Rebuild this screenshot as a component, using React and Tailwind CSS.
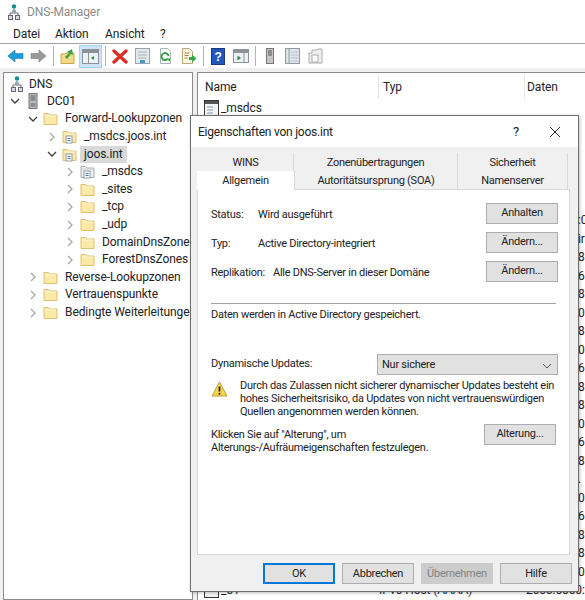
import React from "react";

function DnsIcon() {
  return (
    <svg width="12" height="16" viewBox="0 0 12 16">
      <circle cx="6" cy="2.5" r="2.2" fill="#0f8f8f" />
      <path d="M6 5v4M2 12V9h8v3" fill="none" stroke="#667" strokeWidth="1" />
      <rect x="4" y="6" width="4" height="3" fill="#9aa7b0" />
      <rect x="0.5" y="11.5" width="4" height="4" fill="#d5dde3" stroke="#667" />
      <rect x="7.5" y="11.5" width="4" height="4" fill="#d5dde3" stroke="#667" />
    </svg>
  );
}

function ServerIcon() {
  return (
    <svg width="10" height="16" viewBox="0 0 10 16">
      <rect x="1" y="0.5" width="8" height="15" fill="#b9bdbf" stroke="#777" />
      <path d="M2.5 3h5M2.5 5h5M2.5 7h5" stroke="#55595c" strokeWidth="1" />
      <rect x="2.5" y="10" width="5" height="4" fill="#8b8f92" />
    </svg>
  );
}

function Folder({ doc, grey }) {
  return (
    <svg width="15" height="15" viewBox="0 0 15 15">
      <path d="M1 13.5V2.5h4.5l1.5 1.5h7v9.5z" fill={grey ? "#eceeef" : "#fce9a8"} stroke={grey ? "#a8adb0" : "#dcc070"} />
      <path d="M2 5h11" stroke={grey ? "#d0d4d6" : "#fdf5d4"} />
      {doc && <rect x="4" y="7" width="6" height="7" fill="#fff" stroke="#8f9ba8" />}
      {doc && <path d="M5.5 9.5h3M5.5 11.5h3" stroke="#3b78b8" />}
    </svg>
  );
}

function Chevron({ open }) {
  return (
    <svg width="10" height="10" viewBox="0 0 10 10">
      {open ? (
        <path d="M1 3l4 4 4-4" fill="none" stroke="#404040" strokeWidth="1.3" />
      ) : (
        <path d="M3 1l4 4-4 4" fill="none" stroke="#a6a6a6" strokeWidth="1.3" />
      )}
    </svg>
  );
}

function TreeRow({ pad, open, icon, label, selected }) {
  return (
    <div className="flex h-[17.6px] items-center" style={{ paddingLeft: pad }}>
      <span className="flex w-[14px] shrink-0 justify-center">
        {open !== undefined && <Chevron open={open} />}
      </span>
      <span className="ml-[3px] flex w-[15px] shrink-0 justify-center">{icon}</span>
      <span className={`ml-[3px] px-[4px] leading-[17px] whitespace-nowrap ${selected ? "bg-[#d9d9d9]" : ""}`}>{label}</span>
    </div>
  );
}

const backIcon = (
  <svg width="17" height="14" viewBox="0 0 17 14">
    <path d="M1 7l7-6v3.5h8v5H8V13z" fill="#1e9fd8" stroke="#1478b0" strokeWidth="0.6" />
  </svg>
);
const fwdIcon = (
  <svg width="17" height="14" viewBox="0 0 17 14">
    <path d="M16 7L9 1v3.5H1v5h8V13z" fill="#9a9a9a" stroke="#777" strokeWidth="0.6" />
  </svg>
);
const upIcon = (
  <svg width="15" height="17" viewBox="0 0 15 17">
    <path d="M1 15.5V6h4l1-1h8v10.5z" fill="#f2d987" stroke="#c9a94f" />
    <path d="M5 9l4-4-2-1 5-3 1 6-2-1-4 5z" fill="#3fa142" />
  </svg>
);
const treeIcon = (
  <svg width="17" height="15" viewBox="0 0 17 15">
    <rect x="0.5" y="0.5" width="16" height="14" fill="#eef1f3" stroke="#8b9298" />
    <rect x="1" y="1" width="15" height="3" fill="#8b9298" />
    <path d="M6.5 4v10" stroke="#8b9298" />
    <path d="M12 7v4l-3-2z" fill="#2d8a4e" />
  </svg>
);
const deleteIcon = (
  <svg width="16" height="15" viewBox="0 0 16 15">
    <path d="M2 2l12 11M14 2L2 13" stroke="#d9302a" strokeWidth="3.4" strokeLinecap="round" />
  </svg>
);
const propsIcon = (
  <svg width="15" height="16" viewBox="0 0 15 16">
    <rect x="0.5" y="0.5" width="14" height="15" fill="#e3e8ea" stroke="#9aa3a8" />
    <path d="M3 4h9M3 7h9M3 10h9" stroke="#aab2b6" />
    <rect x="5" y="12" width="5" height="3" fill="#3d9ccf" />
  </svg>
);
const refreshIcon = (
  <svg width="15" height="16" viewBox="0 0 15 16">
    <path d="M2.5.5h7l3 3v12h-10z" fill="#fff" stroke="#aab2b6" />
    <path d="M10.5 8a3.5 3.5 0 1 0-1 3" fill="none" stroke="#2e9e3f" strokeWidth="1.8" />
    <path d="M8 10.5h4v3z" fill="#2e9e3f" />
  </svg>
);
const exportIcon = (
  <svg width="16" height="16" viewBox="0 0 16 16">
    <path d="M1.5.5h7l3 3v12h-10z" fill="#fdf6e3" stroke="#b9a77a" />
    <path d="M3.5 5h5M3.5 7.5h4M3.5 10h3" stroke="#c0763a" />
    <path d="M8 9h3V6.5l4.5 4-4.5 4V12H8z" fill="#37a84a" />
  </svg>
);
const helpIcon = (
  <svg width="14" height="17" viewBox="0 0 14 17">
    <rect x="0.5" y="0.5" width="13" height="16" fill="#2458b8" stroke="#173a80" />
    <text x="7" y="13" fontSize="12" fontWeight="700" fill="#fff" textAnchor="middle" fontFamily="Liberation Sans, sans-serif">?</text>
  </svg>
);
const panelIcon = (
  <svg width="16" height="14" viewBox="0 0 16 14">
    <rect x="0.5" y="0.5" width="15" height="13" fill="#eef1f3" stroke="#8b9298" />
    <rect x="1" y="1" width="14" height="3" fill="#8b9298" />
    <path d="M11 4v10" stroke="#8b9298" />
    <path d="M4.5 6.5v5l3.5-2.5z" fill="#2d8a4e" />
  </svg>
);
const towerIcon = (
  <svg width="8" height="16" viewBox="0 0 8 16">
    <rect x="0.5" y="0.5" width="7" height="15" fill="#c3c6c8" stroke="#777" />
    <path d="M2 3h4M2 5h4M2 7h4" stroke="#55595c" />
  </svg>
);
const listIcon = (
  <svg width="15" height="16" viewBox="0 0 15 16">
    <rect x="0.5" y="0.5" width="14" height="15" fill="#dde6ea" stroke="#8f9ba1" />
    <path d="M4 1v14" stroke="#8f9ba1" />
    <path d="M5.5 4h8M5.5 7h8M5.5 10h8M5.5 13h8" stroke="#b6c2c8" />
  </svg>
);
const docsIcon = (
  <svg width="15" height="16" viewBox="0 0 15 16">
    <path d="M1 15V5h3V2h5l1-1h4v14z" fill="#eceeef" stroke="#a8adb0" />
    <rect x="4" y="7" width="6" height="7" fill="#fff" stroke="#a8adb0" />
  </svg>
);

function ToolBtn({ children, active }) {
  return (
    <span className={`flex h-[23px] w-[23px] items-center justify-center ${active ? "border border-[#a9d3ee] bg-[#cce4f7]" : ""}`}>
      {children}
    </span>
  );
}

function ToolSep() {
  return (
    <span className="flex w-[6px] justify-center">
      <span className="h-[20px] w-px bg-[#b0b0b0]" />
    </span>
  );
}

function Btn({ children, cls = "border-[#adadad] bg-[#e1e1e1] text-[#222]" }) {
  return (
    <div className={`flex h-[21px] w-[72px] shrink-0 items-center justify-center border text-[11px] tracking-[-0.26px] ${cls}`}>
      {children}
    </div>
  );
}

function Tab({ w, label, active }) {
  return (
    <div
      className={`flex items-center justify-center border-r border-[#d9d9d9] text-[11px] tracking-[-0.26px] ${
        active ? "h-[19px] bg-white pt-[1px]" : "h-[18px] bg-[#f0f0f0] pt-[3px]"
      }`}
      style={{ width: w }}
    >
      {label}
    </div>
  );
}

function InfoRow({ label, value, button, valueCls }) {
  return (
    <div className="flex h-[29px] items-center justify-between">
      <div className="flex pt-[3px]">
        <span className={valueCls}>{label}</span>
        <span>{value}</span>
      </div>
      <Btn>{button}</Btn>
    </div>
  );
}

// what is still readable of the Daten column to the right of the dialog
const dataFragments = [":0", "ir", "8", "6", "8", "0", "8", "0", "6", "8", "8", "0", "6", "8", ".", "0", "6", "8", "8", "0"];

export default function App() {
  return (
    <div className="relative h-[600px] w-[585px] overflow-hidden bg-[#f0f0f0] font-['Roboto','Open_Sans',sans-serif] text-[12px] tracking-[-0.1px] text-[#222]">
      {/* title bar + menu */}
      <div className="flex h-[23px] items-center bg-white pl-[8px]">
        <DnsIcon />
        <span className="ml-[7px] text-[#8c8c8c]">DNS-Manager</span>
      </div>
      <div className="flex h-[21px] items-center border-b border-[#a0a0a0] bg-white pt-[1px] pl-[13px]">
        <span className="w-[42px]">Datei</span>
        <span className="w-[50px]">Aktion</span>
        <span className="w-[55px]">Ansicht</span>
        <span>?</span>
      </div>

      {/* toolbar */}
      <div className="flex h-[24px] items-center bg-white pl-[4px]">
        <ToolBtn>{backIcon}</ToolBtn>
        <ToolBtn>{fwdIcon}</ToolBtn>
        <ToolSep />
        <ToolBtn>{upIcon}</ToolBtn>
        <ToolBtn active>{treeIcon}</ToolBtn>
        <ToolSep />
        <ToolBtn>{deleteIcon}</ToolBtn>
        <ToolBtn>{propsIcon}</ToolBtn>
        <ToolBtn>{refreshIcon}</ToolBtn>
        <ToolBtn>{exportIcon}</ToolBtn>
        <ToolSep />
        <ToolBtn>{helpIcon}</ToolBtn>
        <ToolBtn>{panelIcon}</ToolBtn>
        <ToolSep />
        <ToolBtn>{towerIcon}</ToolBtn>
        <ToolBtn>{listIcon}</ToolBtn>
        <ToolBtn>{docsIcon}</ToolBtn>
      </div>

      {/* panes */}
      <div className="mt-[4px] flex h-[528px] gap-[4px] pl-[3px]">
        <div className="w-[190px] shrink-0 overflow-hidden border border-[#8c8c8c] bg-white pt-[2px]">
          <div className="flex h-[17.6px] items-center pl-[7px]">
            <DnsIcon />
            <span className="ml-[6px]">DNS</span>
          </div>
          <TreeRow pad={4} open={true} icon={<ServerIcon />} label="DC01" />
          <TreeRow pad={22} open={true} icon={<Folder />} label="Forward-Lookupzonen" />
          <TreeRow pad={41} open={false} icon={<Folder doc />} label="_msdcs.joos.int" />
          <TreeRow pad={41} open={true} icon={<Folder doc />} label="joos.int" selected />
          <TreeRow pad={59} open={false} icon={<Folder doc grey />} label="_msdcs" />
          <TreeRow pad={59} open={false} icon={<Folder />} label="_sites" />
          <TreeRow pad={59} open={false} icon={<Folder />} label="_tcp" />
          <TreeRow pad={59} open={false} icon={<Folder />} label="_udp" />
          <TreeRow pad={59} open={false} icon={<Folder />} label="DomainDnsZones" />
          <TreeRow pad={59} open={false} icon={<Folder />} label="ForestDnsZones" />
          <TreeRow pad={22} open={false} icon={<Folder />} label="Reverse-Lookupzonen" />
          <TreeRow pad={22} open={false} icon={<Folder />} label="Vertrauenspunkte" />
          <TreeRow pad={22} open={false} icon={<Folder />} label="Bedingte Weiterleitungen" />
        </div>

        <div className="min-w-0 flex-1 overflow-hidden border-t border-l border-[#8c8c8c] bg-white">
          <div className="flex h-[26px] items-center pt-[2px]">
            <span className="w-[181px] border-r border-[#e5e5e5] pl-[7px] leading-[24px]">Name</span>
            <span className="w-[146px] border-r border-[#e5e5e5] pl-[4px] leading-[24px]">Typ</span>
            <span className="pl-[2px]">Daten</span>
          </div>
          <div className="flex h-[18px] items-center pl-[6px]">
            <svg width="15" height="16" viewBox="0 0 15 16">
              <rect x="0.5" y="0.5" width="14" height="15" fill="#f4f4f4" stroke="#333" />
              <rect x="1" y="1" width="13" height="3" fill="#555" />
              <path d="M3 7h6M3 10h6M3 13h6" stroke="#8a9aa8" />
            </svg>
            <span className="ml-[2px]">_msdcs</span>
          </div>
          <div className="mt-[94px]">
            {dataFragments.map((text, i) => (
              <div key={i} className="h-[18.5px] overflow-hidden pl-[380px] leading-[18px] whitespace-nowrap">
                {text}
              </div>
            ))}
            <div className="flex h-[18.5px] items-center whitespace-nowrap">
              <svg width="15" height="16" viewBox="0 0 15 16" className="ml-[6px]">
                <rect x="0.5" y="0.5" width="14" height="15" fill="#f4f4f4" stroke="#333" />
              </svg>
              <span className="ml-[2px] w-[158px]">_51</span>
              <span className="w-[147px]">IPv6-Host (AAAA)</span>
              <span>2003:6000:</span>
            </div>
          </div>
        </div>
      </div>

      {/* properties dialog */}
      <div className="absolute top-[115px] left-[190px] flex h-[477px] w-[389px] flex-col border border-[#6e6e6e] bg-[#f0f0f0] shadow-[1px_1px_3px_rgba(0,0,0,0.25)]">
        <div className="flex h-[31px] shrink-0 items-center justify-between bg-white pl-[7px]">
          <span className="tracking-[-0.23px]">Eigenschaften von joos.int</span>
          <div className="flex items-center">
            <span className="w-[16px] text-[13px]">?</span>
            <svg width="12" height="12" viewBox="0 0 12 12" className="mr-[17px] ml-[20px]">
              <path d="M1 1l10 10M11 1L1 11" stroke="#222" strokeWidth="1" />
            </svg>
          </div>
        </div>

        <div className="mt-[6px] ml-[6px] flex-1">
          <div className="flex pl-[1px]">
            <Tab w={96} label="WINS" />
            <Tab w={164} label="Zonenübertragungen" />
            <Tab w={110} label="Sicherheit" />
          </div>
          <div className="relative z-10 flex">
            <Tab w={98} label="Allgemein" active />
            <Tab w={163} label="Autoritätsursprung (SOA)" />
            <Tab w={110} label="Namenserver" />
          </div>
          <div className="-mt-px h-[366px] w-[373px] border border-[#d9d9d9] bg-white pr-[11px] pl-[13px] text-[11px] tracking-[-0.26px]">
            <div className="pt-[9px]">
              <InfoRow label="Status:" value="Wird ausgeführt" button="Anhalten" valueCls="w-[47px]" />
              <InfoRow label="Typ:" value="Active Directory-integriert" button="Ändern..." valueCls="w-[47px]" />
              <InfoRow label="Replikation:" value="Alle DNS-Server in dieser Domäne" button="Ändern..." valueCls="w-[62px]" />
            </div>
            <div className="mt-[17px] h-px w-[345px] bg-[#a0a0a0]" />
            <div className="mt-[2px] leading-[18px]">Daten werden in Active Directory gespeichert.</div>
            <div className="mt-[30px] flex items-center justify-between">
              <span>Dynamische Updates:</span>
              <div className="flex h-[21px] w-[181px] items-center justify-between border border-[#adadad] bg-[#e1e1e1] pt-[2px] pr-[5px] pl-[4px]">
                <span>Nur sichere</span>
                <svg width="10" height="6" viewBox="0 0 10 6">
                  <path d="M1 1l4 4 4-4" fill="none" stroke="#555" />
                </svg>
              </div>
            </div>
            <div className="mt-[4px] flex">
              <svg width="17" height="16" viewBox="0 0 17 16" className="mt-[2px] shrink-0">
                <path d="M8.5 1L16 15H1z" fill="#f7d84a" stroke="#b8a03a" strokeLinejoin="round" />
                <path d="M8.5 5.5v5" stroke="#222" strokeWidth="1.8" />
                <circle cx="8.5" cy="12.7" r="1" fill="#222" />
              </svg>
              <p className="ml-[12px] leading-[13px] whitespace-nowrap">
                Durch das Zulassen nicht sicherer dynamischer Updates besteht ein
                <br />
                hohes Sicherheitsrisiko, da Updates von nicht vertrauenswürdigen
                <br />
                Quellen angenommen werden können.
              </p>
            </div>
            <div className="mt-[6px] flex items-start justify-between pr-[2px]">
              <p className="mt-[4px] leading-[13px]">
                Klicken Sie auf "Alterung", um
                <br />
                Alterungs-/Aufräumeigenschaften festzulegen.
              </p>
              <Btn>Alterung...</Btn>
            </div>
          </div>
        </div>

        <div className="mb-[7px] flex justify-end gap-[7px] pr-[6px]">
          <Btn cls="border-2 border-[#0078d7] bg-[#e1e1e1] pt-[2px] text-[#222]">OK</Btn>
          <Btn cls="border-[#adadad] bg-[#e1e1e1] pt-[2px] text-[#222]">Abbrechen</Btn>
          <Btn cls="border-[#cccccc] bg-[#cccccc] pt-[2px] text-[#838383]">Übernehmen</Btn>
          <Btn cls="border-[#adadad] bg-[#e1e1e1] pt-[2px] text-[#222]">Hilfe</Btn>
        </div>
      </div>
    </div>
  );
}
